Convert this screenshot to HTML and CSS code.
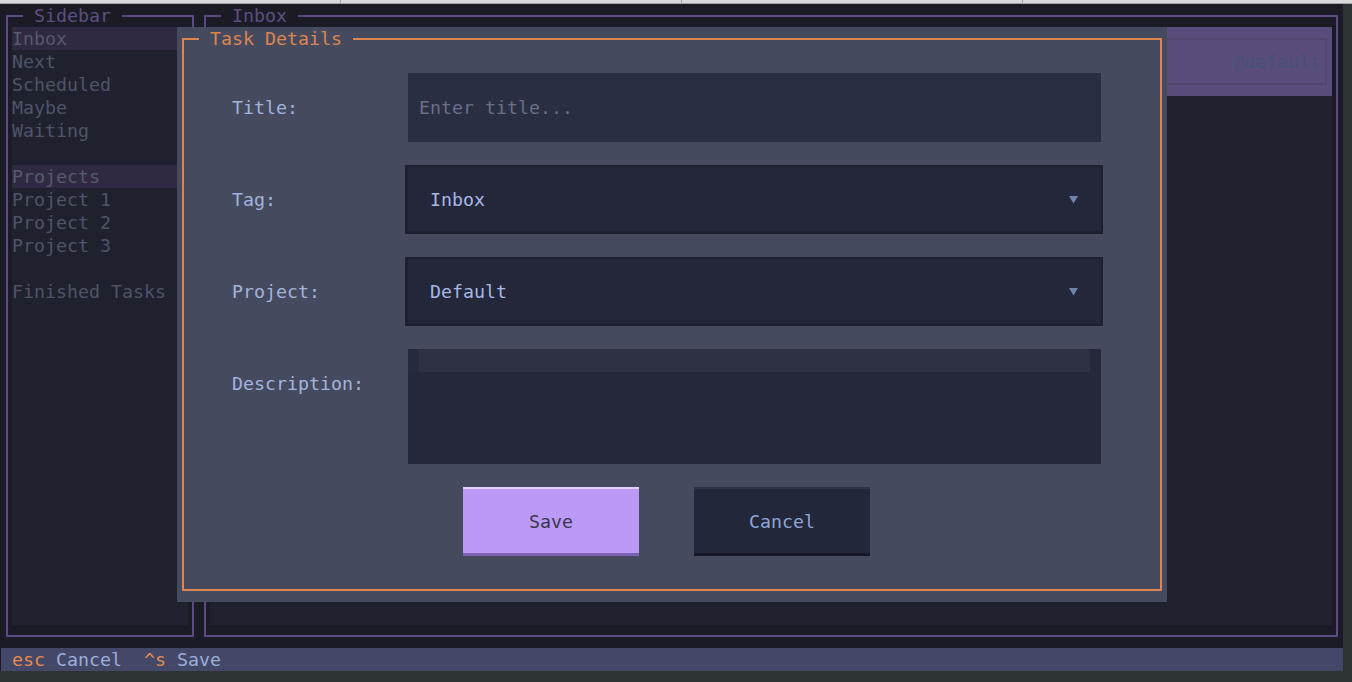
FILE: index.html
```html
<!DOCTYPE html>
<html lang="en">
<head>
<meta charset="utf-8">
<title>Task Details</title>
<link rel="stylesheet" href="styles.css">
</head>
<body>
<div class="chrome"><span class="tab"></span><span class="tab"></span><span class="tab"></span><span class="tab last"></span></div>
<div class="term">
  <div class="panels">
    <section class="panel sidebar">
      <div class="frame">
        <span class="ptitle">Sidebar</span>
        <div class="nav">
          <div class="item active">Inbox</div>
          <div class="item">Next</div>
          <div class="item">Scheduled</div>
          <div class="item">Maybe</div>
          <div class="item">Waiting</div>
          <div class="item blank"></div>
          <div class="item active">Projects</div>
          <div class="item">Project 1</div>
          <div class="item">Project 2</div>
          <div class="item">Project 3</div>
          <div class="item blank"></div>
          <div class="item">Finished Tasks</div>
        </div>
      </div>
    </section>
    <section class="panel main">
      <div class="frame">
        <span class="ptitle">Inbox</span>
        <div class="content">
          <div class="card"><div class="card-frame"><span class="tag">@default</span></div></div>
        </div>
      </div>
    </section>
  </div>
  <footer class="footer"><span class="key">esc</span> Cancel  <span class="key">^s</span> Save</footer>

  <div class="modal">
    <div class="mframe">
      <span class="mtitle">Task Details</span>
      <div class="form">
        <label class="label">Title:</label>
        <input class="input" type="text" placeholder="Enter title...">

        <label class="label">Tag:</label>
        <div class="select"><span class="sval">Inbox</span><svg class="arrow" width="11" height="23" viewBox="0 0 11 23"><polygon points="1,8 10,8 5.5,15.5" fill="#6f84ad"/></svg></div>

        <label class="label">Project:</label>
        <div class="select"><span class="sval">Default</span><svg class="arrow" width="11" height="23" viewBox="0 0 11 23"><polygon points="1,8 10,8 5.5,15.5" fill="#6f84ad"/></svg></div>

        <label class="label">Description:</label>
        <div class="textarea"><div class="tline"><span class="gutter"></span><span class="cursorline"></span></div></div>

        <div class="buttons">
          <button class="btn save">Save</button>
          <button class="btn cancel">Cancel</button>
        </div>
      </div>
    </div>
  </div>
</div>
</body>
</html>
```
FILE: styles.css
```css
* { box-sizing: border-box; }

html, body {
  margin: 0;
  padding: 0;
}

body {
  background: #2e3436;
  width: 1352px;
  height: 682px;
  overflow: hidden;
  font-family: "DejaVu Sans Mono", "Liberation Mono", monospace;
  font-size: 18.27px;
  line-height: 23px;
}

.chrome {
  display: flex;
  height: 4px;
  background: #d9d9d9;
  border-bottom: 1px solid #a4a4a4;
}
.tab {
  width: 341px;
  height: 3px;
  border-right: 1px solid #a0a0a0;
}
.tab.last { border-right: 0; flex: 1; }

.term {
  position: relative;
  width: 1343px;
  padding-left: 1px;
  background: #1b1b26;
}

.panels {
  display: flex;
  height: 644px;
}

.panel {
  height: 644px;
  padding: 11px 5px;
}
.sidebar { width: 198px; }
.main { width: 1144px; }

.frame {
  position: relative;
  height: 100%;
  border: 2px solid #5d4a84;
  padding: 10px 4px;
}

.ptitle {
  position: absolute;
  top: -13px;
  left: 15px;
  padding: 0 11px;
  background: #1b1b26;
  color: #5b4f7e;
  white-space: pre;
}

.nav, .content {
  height: 100%;
  background: #20212f;
}

.item {
  height: 23px;
  color: #4f5468;
  white-space: pre;
}
.item.active {
  background: #2f2a41;
  color: #565a6e;
}

.card {
  height: 69px;
  background: #5b4d7b;
  padding: 11px 5px;
}
.card-frame {
  height: 100%;
  border: 2px solid #53466f;
  padding: 10px 4px 0;
  text-align: right;
}
.tag { color: #44527a; }

.footer {
  height: 23px;
  background: #434868;
  color: #9daed8;
  padding-left: 11px;
  white-space: pre;
}
.key { color: #e5894f; }

/* modal overlay */
.modal {
  position: absolute;
  left: 177px;
  top: 23px;
  width: 990px;
  height: 575px;
  background: #464a5e;
  padding: 11px 5px;
}
.mframe {
  position: relative;
  height: 100%;
  border: 2px solid #dc8552;
  padding: 33px 0 0 48px;
}
.mtitle {
  position: absolute;
  top: -13px;
  left: 15px;
  padding: 0 11px;
  background: #464a5e;
  color: #dc8552;
  white-space: pre;
}

.form {
  display: grid;
  grid-template-columns: 176px 693px;
  row-gap: 23px;
}

.label {
  padding-top: 23px;
  color: #a2b3de;
  white-space: pre;
}

.input {
  display: block;
  width: 693px;
  height: 69px;
  border: 0;
  outline: 0;
  margin: 0;
  padding: 0 11px;
  background: #2a2e42;
  font: inherit;
  line-height: 23px;
  color: #a2b3de;
}
.input::placeholder { color: #6b7088; opacity: 1; }

.select {
  display: flex;
  align-items: center;
  justify-content: space-between;
  width: 698px;
  height: 69px;
  margin-left: -3px;
  border-style: solid;
  border-color: #1d2030;
  border-width: 2px 2px 3px 3px;
  background: #232739;
  padding: 0 22px;
  color: #a6b8e6;
}
.arrow { display: block; }

.textarea {
  width: 693px;
  height: 115px;
  background: #24283a;
}
.tline { display: flex; height: 23px; }
.gutter { width: 11px; background: #262a3c; }
.cursorline { width: 671px; background: #2e3143; }

.buttons {
  grid-column: 1 / -1;
  display: flex;
  gap: 55px;
  padding-left: 231px;
}

.btn {
  width: 176px;
  height: 69px;
  margin: 0;
  padding: 0;
  font: inherit;
  line-height: 23px;
  border: 0;
  border-top: 2px solid;
  border-bottom: 3px solid;
  display: flex;
  align-items: center;
  justify-content: center;
}
.btn.save {
  background: #bb9af6;
  border-top-color: #e4d0fc;
  border-bottom-color: #7e63b4;
  color: #38364f;
}
.btn.cancel {
  background: #23273a;
  border-top-color: #2e3246;
  border-bottom-color: #171926;
  color: #8ea5d6;
}
```
